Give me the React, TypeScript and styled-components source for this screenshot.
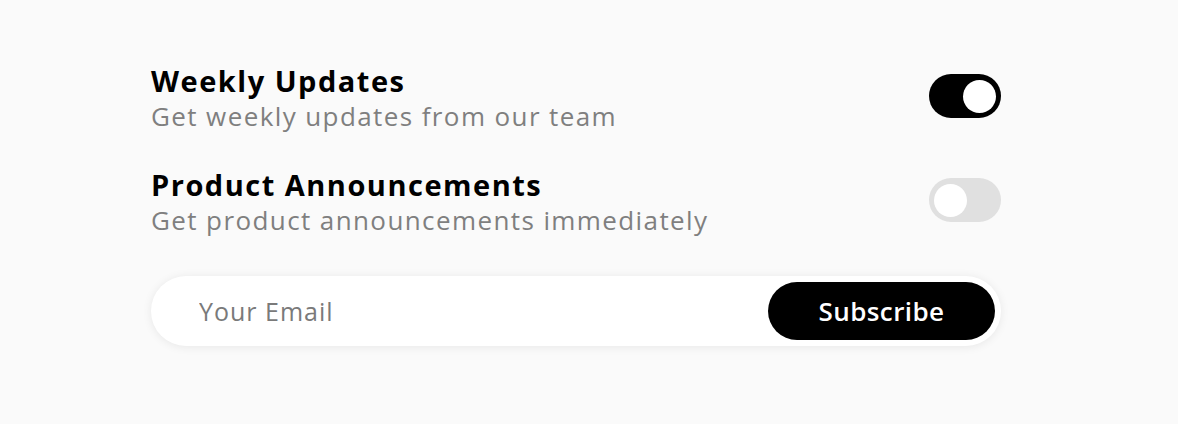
import React, { useState } from "react";
import styled, { createGlobalStyle } from "styled-components";

const Global = createGlobalStyle`
  html, body { margin: 0; padding: 0; background: #fafafa; }
  body { font-family: "Open Sans", "Noto Sans", sans-serif; }
  * { box-sizing: border-box; }
`;

const Page = styled.div`
  width: 1178px;
  height: 424px;
  background: #fafafa;
  padding: 46px 0 0 151px;
`;

const Panel = styled.div`
  width: 850px;
  display: flex;
  flex-direction: column;
`;

const Row = styled.div`
  display: flex;
  align-items: center;
  justify-content: space-between;
  height: 104px;
`;

const TextCol = styled.div`
  display: flex;
  flex-direction: column;
`;

const Title = styled.div`
  font-size: 29px;
  font-weight: 700;
  color: #000;
  line-height: 36px;
  letter-spacing: 1.5px;
`;

const Sub = styled.div`
  font-size: 26px;
  font-weight: 400;
  color: #7f7f7f;
  line-height: 34px;
  letter-spacing: 1.4px;
`;

const Track = styled.button<{ $on: boolean }>`
  width: 72px;
  height: 44px;
  border: none;
  padding: 0 5px;
  border-radius: 22px;
  background: ${(p) => (p.$on ? "#000" : "#e0e0e0")};
  display: flex;
  align-items: center;
  justify-content: ${(p) => (p.$on ? "flex-end" : "flex-start")};
  cursor: pointer;
  margin-top: -4px;
`;

const Knob = styled.span`
  width: 33px;
  height: 33px;
  border-radius: 50%;
  background: #fff;
`;

const Field = styled.form`
  margin-top: 22px;
  height: 70px;
  border-radius: 35px;
  background: #fff;
  box-shadow: 0 1px 10px rgba(0, 0, 0, 0.08);
  display: flex;
  align-items: center;
  padding: 6px 6px 6px 46px;
`;

const Input = styled.input`
  flex: 1;
  border: none;
  outline: none;
  background: transparent;
  font-family: "Open Sans", "Noto Sans", sans-serif;
  font-size: 25px;
  letter-spacing: 1px;
  color: #000;
  &::placeholder { color: #7a7a7a; }
`;

const Button = styled.button`
  width: 227px;
  height: 58px;
  border: none;
  border-radius: 29px;
  background: #000;
  color: #fff;
  font-family: "Open Sans", "Noto Sans", sans-serif;
  font-size: 26px;
  font-weight: 600;
  letter-spacing: 0.4px;
  cursor: pointer;
`;

function Toggle({ on, onClick }: { on: boolean; onClick: () => void }) {
  return (
    <Track type="button" $on={on} onClick={onClick}>
      <Knob />
    </Track>
  );
}

export default function App() {
  const [weekly, setWeekly] = useState(true);
  const [product, setProduct] = useState(false);
  return (
    <Page>
      <Global />
      <Panel>
        <Row>
          <TextCol>
            <Title>Weekly Updates</Title>
            <Sub>Get weekly updates from our team</Sub>
          </TextCol>
          <Toggle on={weekly} onClick={() => setWeekly(!weekly)} />
        </Row>
        <Row>
          <TextCol>
            <Title>Product Announcements</Title>
            <Sub>Get product announcements immediately</Sub>
          </TextCol>
          <Toggle on={product} onClick={() => setProduct(!product)} />
        </Row>
        <Field onSubmit={(e) => e.preventDefault()}>
          <Input placeholder="Your Email" />
          <Button type="submit">Subscribe</Button>
        </Field>
      </Panel>
    </Page>
  );
}
